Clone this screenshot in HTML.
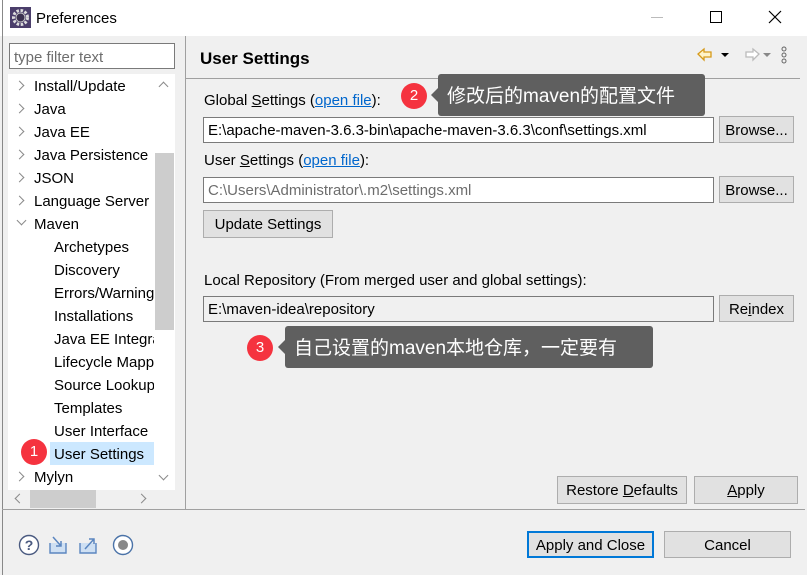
<!DOCTYPE html>
<html><head><meta charset="utf-8"><style>
*{margin:0;padding:0;box-sizing:border-box}
body{width:807px;height:575px;overflow:hidden;background:#f0f0f0;font-family:"Liberation Sans","Noto Sans CJK SC",sans-serif;font-size:15px;color:#000;position:relative}
.a{position:absolute;white-space:nowrap}
.t{position:absolute;white-space:nowrap;line-height:21px}
.box{position:absolute;background:#fff;border:1px solid #7a7a7a}
.btn{position:absolute;background:#e1e1e1;border:1px solid #adadad;text-align:center;line-height:27px;white-space:nowrap}
.chev{position:absolute;width:7px;height:7px;border-right:1.5px solid #8a8a8a;border-top:1.5px solid #8a8a8a;transform:rotate(45deg)}
.red{position:absolute;width:26px;height:26px;border-radius:50%;background:#f5333f;color:#fff;font-size:15px;text-align:center;line-height:26px}
.call{position:absolute;background:#5f5f5f;color:#fff;font-size:19px;border-radius:3px;line-height:45px;padding-left:9px;white-space:nowrap;overflow:visible}
.call:before{content:"";position:absolute;left:-7px;top:14px;border-right:7px solid #5f5f5f;border-top:7px solid transparent;border-bottom:7px solid transparent}
u{text-decoration:underline}
</style></head><body>
<div class="a" style="left:0;top:0;width:807px;height:36px;background:#fff"></div>
<div class="a" style="left:2px;top:0;width:1px;height:575px;background:#888"></div>
<svg class="a" style="left:10px;top:7px" width="21" height="21" viewBox="0 0 21 21"><rect width="21" height="21" fill="#4b3e6b"/><circle cx="10.5" cy="10.5" r="7" fill="none" stroke="#ddd" stroke-width="3" stroke-dasharray="2.5 1.6"/><circle cx="10.5" cy="10.5" r="4.5" fill="#3b3150" stroke="#ccc" stroke-width="1"/></svg>
<div class="t" style="left:36px;top:8px;font-size:15px">Preferences</div>
<div class="a" style="left:651px;top:17px;width:12px;height:1px;background:#bbb"></div>
<div class="a" style="left:710px;top:11px;width:12px;height:12px;border:1px solid #000"></div>
<svg class="a" style="left:768px;top:10px" width="14" height="14"><path d="M1 1L13 13M13 1L1 13" stroke="#000" stroke-width="1.2"/></svg>

<!-- left -->
<div class="box" style="left:9px;top:43px;width:166px;height:26px;border-color:#7a7a7a"></div>
<div class="t" style="left:14px;top:47px;color:#6d6d6d">type filter text</div>
<div class="a" style="left:8px;top:74px;width:167px;height:416px;background:#fff"></div>
<div class="a" style="left:155px;top:153px;width:19px;height:177px;background:#cdcdcd"></div>
<div class="chev" style="left:160px;top:83px;transform:rotate(-45deg)"></div>
<div class="chev" style="left:160px;top:472px;transform:rotate(135deg)"></div>
<div class="a" style="left:50px;top:442px;width:104px;height:23px;background:#cce8ff"></div>
<div class="chev" style="left:16px;top:82px"></div><div class="t" style="left:34px;top:76px">Install/Update</div>
<div class="chev" style="left:16px;top:105px"></div><div class="t" style="left:34px;top:99px">Java</div>
<div class="chev" style="left:16px;top:128px"></div><div class="t" style="left:34px;top:122px">Java EE</div>
<div class="chev" style="left:16px;top:151px"></div><div class="t" style="left:34px;top:145px">Java Persistence</div>
<div class="chev" style="left:16px;top:174px"></div><div class="t" style="left:34px;top:168px">JSON</div>
<div class="chev" style="left:16px;top:197px"></div><div class="t" style="left:34px;top:191px;width:120px;overflow:hidden">Language Server</div>
<div class="chev" style="left:18px;top:217px;transform:rotate(135deg)"></div><div class="t" style="left:34px;top:214px">Maven</div>
<div class="t" style="left:54px;top:237px">Archetypes</div>
<div class="t" style="left:54px;top:260px">Discovery</div>
<div class="t" style="left:54px;top:283px;width:100px;overflow:hidden">Errors/Warnings</div>
<div class="t" style="left:54px;top:306px">Installations</div>
<div class="t" style="left:54px;top:329px;width:100px;overflow:hidden">Java EE Integration</div>
<div class="t" style="left:54px;top:352px;width:100px;overflow:hidden">Lifecycle Mappings</div>
<div class="t" style="left:54px;top:375px;width:100px;overflow:hidden">Source Lookup</div>
<div class="t" style="left:54px;top:398px">Templates</div>
<div class="t" style="left:54px;top:421px;width:100px;overflow:hidden">User Interface</div>
<div class="t" style="left:54px;top:444px">User Settings</div>
<div class="chev" style="left:16px;top:473px"></div><div class="t" style="left:34px;top:467px">Mylyn</div>
<div class="a" style="left:30px;top:490px;width:66px;height:18px;background:#cdcdcd"></div>
<div class="chev" style="left:16px;top:495px;transform:rotate(-135deg)"></div>
<div class="chev" style="left:138px;top:495px"></div>
<div class="red" style="left:21px;top:439px">1</div>

<div class="a" style="left:185px;top:36px;width:1px;height:473px;background:#a0a0a0"></div>
<div class="a" style="left:2px;top:509px;width:803px;height:1px;background:#a0a0a0"></div>

<!-- right -->
<div class="t" style="left:200px;top:48px;font-size:17px;font-weight:bold">User Settings</div>
<div class="a" style="left:186px;top:78px;width:614px;height:1px;background:#a0a0a0"></div>
<svg class="a" style="left:696px;top:46px" width="96" height="18" viewBox="0 0 96 18"><path d="M2 8L8 3V6H15V11H8V14Z" fill="#fff3c8" stroke="#d69a1a" stroke-width="1.3"/><path d="M25 7H33L29 11Z" fill="#000"/><path d="M63 8L57 3V6H50V11H57V14Z" fill="#fff" stroke="#bbb" stroke-width="1.3"/><path d="M67 7H75L71 11Z" fill="#888"/><circle cx="88" cy="3" r="2" fill="none" stroke="#666"/><circle cx="88" cy="9" r="2" fill="none" stroke="#666"/><circle cx="88" cy="15" r="2" fill="none" stroke="#666"/></svg>

<div class="t" style="left:204px;top:90px">Global <u>S</u>ettings (<u style="color:#0066cc">open file</u>):</div>
<div class="box" style="left:203px;top:117px;width:511px;height:26px"></div>
<div class="t" style="left:208px;top:120px">E:\apache-maven-3.6.3-bin\apache-maven-3.6.3\conf\settings.xml</div>
<div class="btn" style="left:719px;top:116px;width:75px;height:27px">Browse...</div>

<div class="t" style="left:204px;top:150px">User <u>S</u>ettings (<u style="color:#0066cc">open file</u>):</div>
<div class="box" style="left:203px;top:177px;width:511px;height:26px"></div>
<div class="t" style="left:208px;top:180px;color:#6d6d6d">C:\Users\Administrator\.m2\settings.xml</div>
<div class="btn" style="left:719px;top:176px;width:75px;height:27px">Browse...</div>
<div class="btn" style="left:203px;top:210px;width:130px;height:28px">Update Settings</div>

<div class="t" style="left:204px;top:270px">Local Repository (From merged user and global settings):</div>
<div class="box" style="left:203px;top:296px;width:511px;height:26px;background:#f0f0f0"></div>
<div class="t" style="left:208px;top:299px">E:\maven-idea\repository</div>
<div class="btn" style="left:719px;top:295px;width:75px;height:27px">Re<u>i</u>ndex</div>

<div class="red" style="left:401px;top:83px">2</div>
<div class="call" style="left:438px;top:74px;width:267px;height:42px">修改后的maven的配置文件</div>
<div class="red" style="left:247px;top:335px">3</div>
<div class="call" style="left:285px;top:326px;width:368px;height:42px">自己设置的maven本地仓库，一定要有</div>

<div class="btn" style="left:557px;top:476px;width:130px;height:28px">Restore <u>D</u>efaults</div>
<div class="btn" style="left:694px;top:476px;width:104px;height:28px"><u>A</u>pply</div>

<!-- bottom -->
<svg class="a" style="left:18px;top:533px" width="118" height="24" viewBox="0 0 118 24"><circle cx="11" cy="12" r="9.5" fill="#fff" stroke="#4a5a80" stroke-width="1.4"/><text x="11" y="17" font-family="Liberation Sans" font-size="14" font-weight="bold" fill="#4a5a80" text-anchor="middle">?</text><path d="M32 10V20H48V10" fill="#cfe0f3" stroke="#5b86c0" stroke-width="1.4"/><path d="M35 4L43 13M43 8V13H38" fill="none" stroke="#5b86c0" stroke-width="1.5"/><path d="M62 10V20H78V10" fill="#cfe0f3" stroke="#5b86c0" stroke-width="1.4"/><path d="M67 16L76 6M71 6H76V11" fill="none" stroke="#5b86c0" stroke-width="1.5"/><circle cx="105" cy="12" r="9.5" fill="#fff" stroke="#4b73a8" stroke-width="1.4"/><circle cx="105" cy="12" r="5" fill="#888"/></svg>
<div class="btn" style="left:527px;top:531px;width:127px;height:27px;border:2px solid #0078d7;line-height:25px">Apply and Close</div>
<div class="btn" style="left:664px;top:531px;width:127px;height:27px">Cancel</div>
</body></html>
